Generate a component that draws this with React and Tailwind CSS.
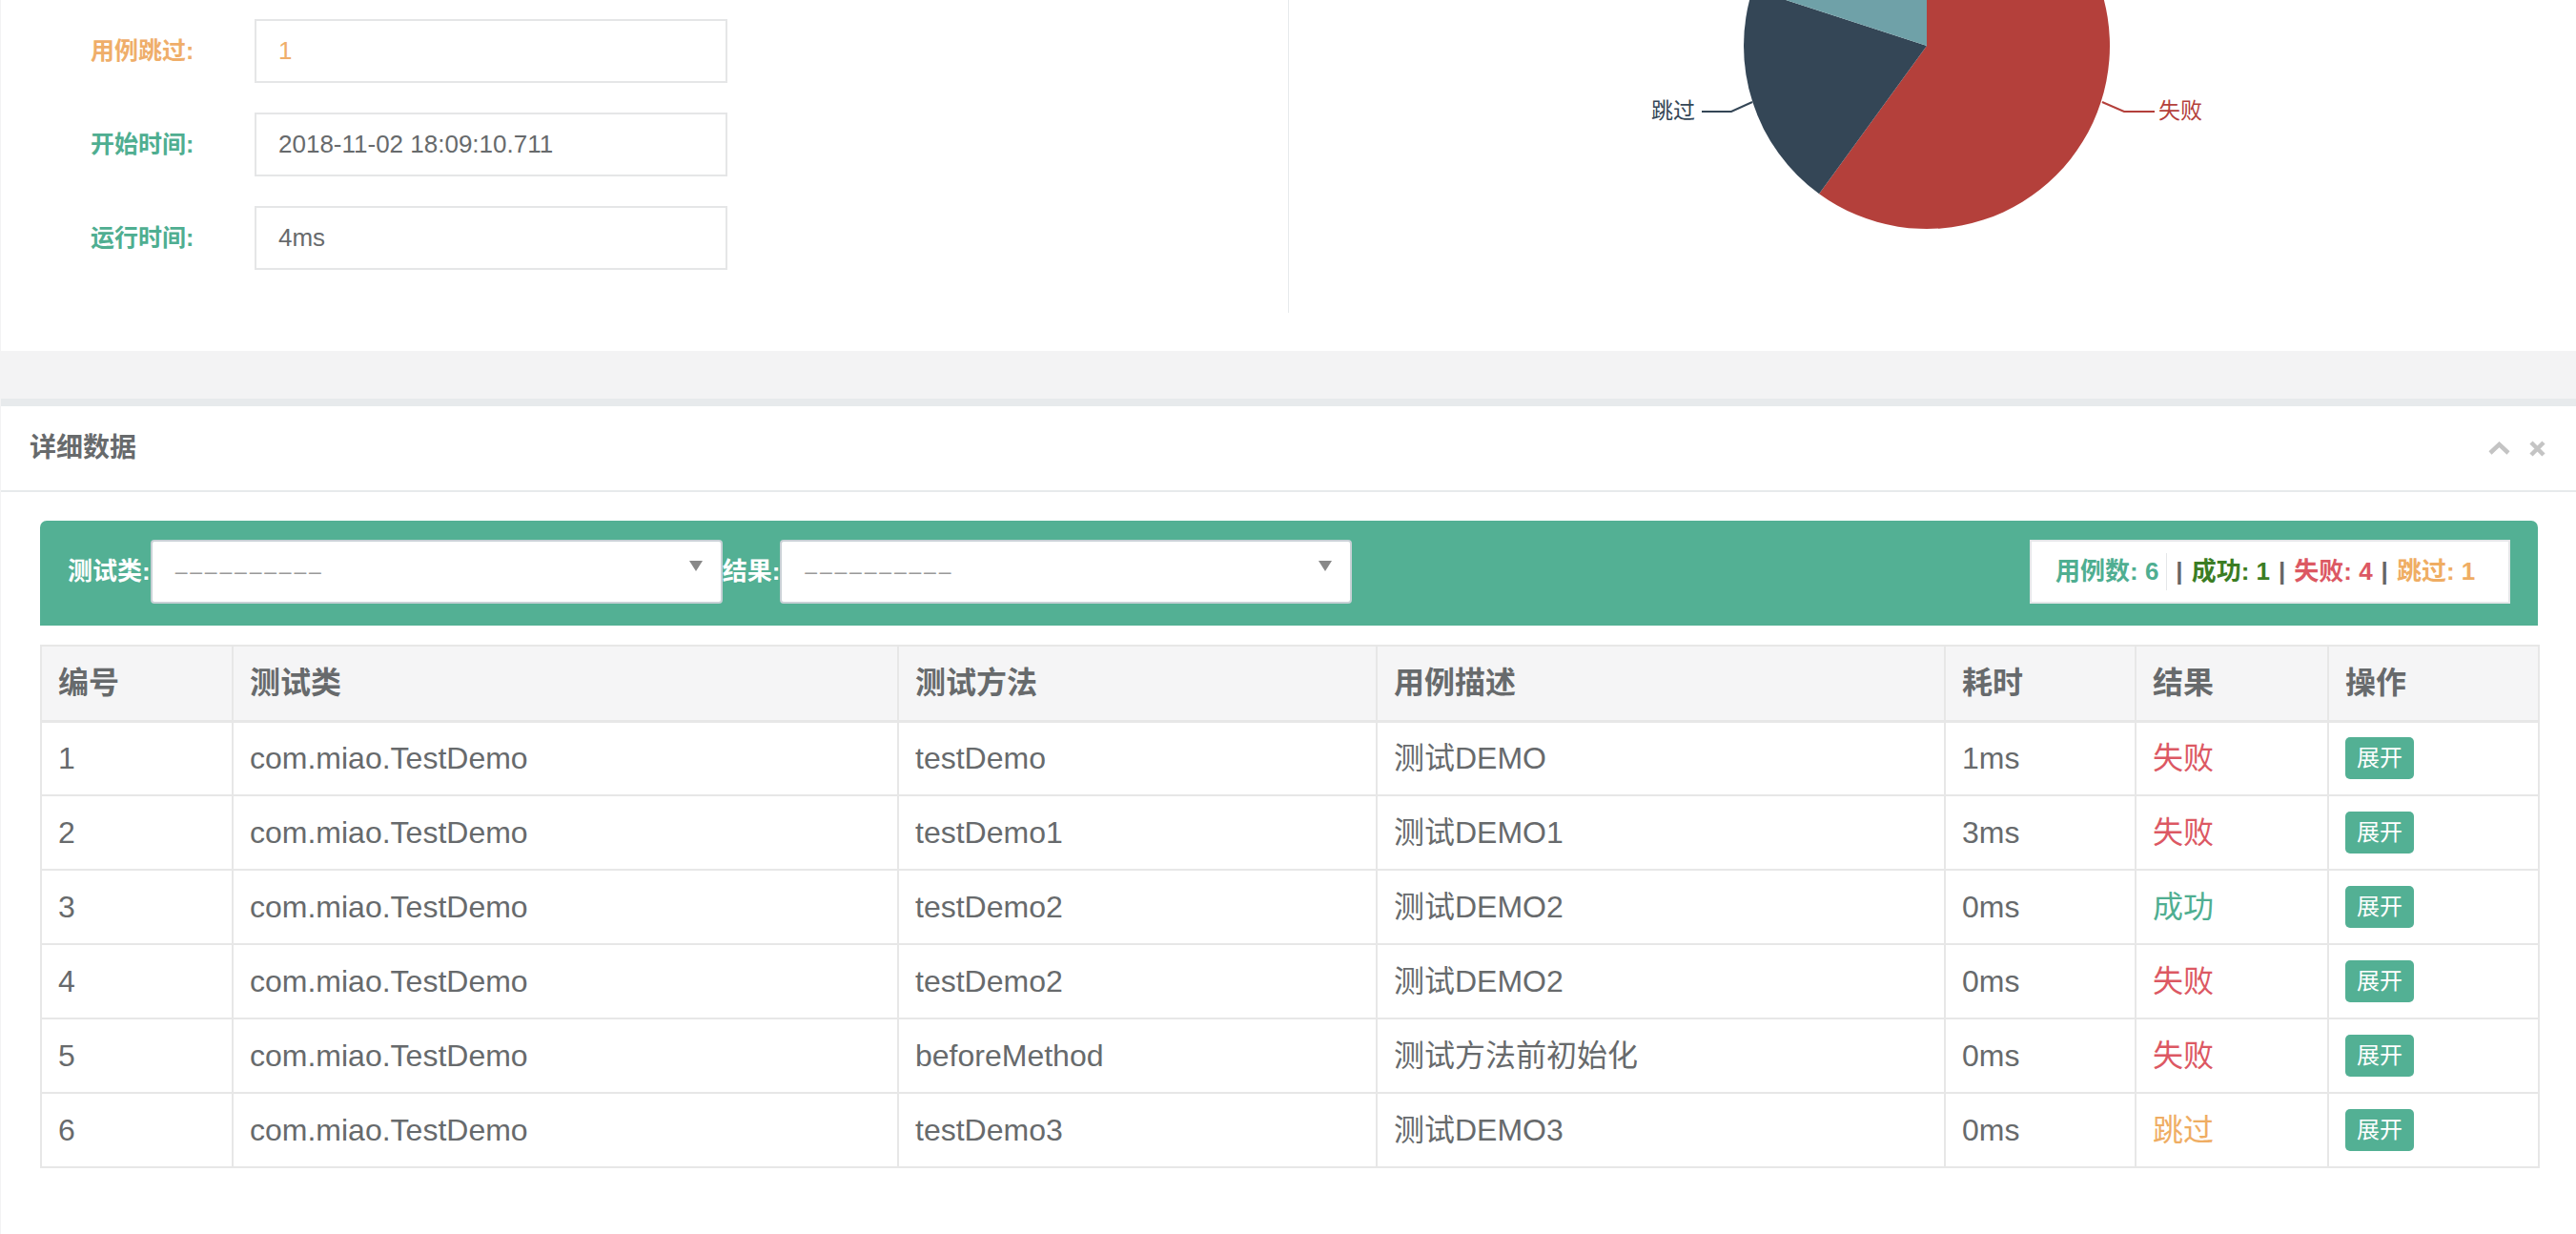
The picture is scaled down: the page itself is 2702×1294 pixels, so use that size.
import React from 'react';

const rows = [
  { id: 1, cls: 'com.miao.TestDemo', method: 'testDemo', desc: '测试DEMO', time: '1ms', result: '失败' },
  { id: 2, cls: 'com.miao.TestDemo', method: 'testDemo1', desc: '测试DEMO1', time: '3ms', result: '失败' },
  { id: 3, cls: 'com.miao.TestDemo', method: 'testDemo2', desc: '测试DEMO2', time: '0ms', result: '成功' },
  { id: 4, cls: 'com.miao.TestDemo', method: 'testDemo2', desc: '测试DEMO2', time: '0ms', result: '失败' },
  { id: 5, cls: 'com.miao.TestDemo', method: 'beforeMethod', desc: '测试方法前初始化', time: '0ms', result: '失败' },
  { id: 6, cls: 'com.miao.TestDemo', method: 'testDemo3', desc: '测试DEMO3', time: '0ms', result: '跳过' },
];

const resultColor = {
  失败: 'text-[#dc5863]',
  成功: 'text-[#4fae91]',
  跳过: 'text-[#efad63]',
};

const InfoRow = ({ label, value, labelClass, valueClass }) => (
  <div className="flex items-center h-[67px]">
    <div className={`w-[172px] text-[25px] font-bold ${labelClass}`}>{label}</div>
    <div className={`w-[496px] h-[67px] border-2 border-[#e5e6e7] flex items-center pl-[23px] text-[26px] ${valueClass}`}>
      {value}
    </div>
  </div>
);

const Select = () => (
  <div className="relative w-[600px] h-[67px] bg-white border-2 border-[#c9d1d6] rounded-[4px] flex items-center pl-[24px]">
    <span className="text-[23px] tracking-[2.8px] text-[#999] leading-none">––––––––––</span>
    <svg className="absolute right-[19px] top-[20px]" width="14" height="11" viewBox="0 0 14 11">
      <path d="M0 0 L14 0 L7 11 Z" fill="#888" />
    </svg>
  </div>
);

const PieChart = () => (
  <svg width="1350" height="328" viewBox="0 0 1350 328">
    <path d="M669 48 L669 -144 A192 192 0 1 1 556.1 203.3 Z" fill="#b4403b" />
    <path d="M669 48 L556.1 203.3 A192 192 0 0 1 486.4 -11.3 Z" fill="#344656" />
    <path d="M669 48 L486.4 -11.3 A192 192 0 0 1 669 -144 Z" fill="#6fa1a8" />
    <polyline points="486,107 464,117 433,117" fill="none" stroke="#344656" strokeWidth="2" />
    <text x="426" y="124" textAnchor="end" fontSize="23" fill="#344656">跳过</text>
    <polyline points="853,107 876,117 908,117" fill="none" stroke="#b4403b" strokeWidth="2" />
    <text x="912" y="124" fontSize="23" fill="#b4403b">失败</text>
  </svg>
);

const App = () => {
  return (
    <div className="w-[2702px] h-[1294px] overflow-hidden bg-[#f3f3f4] font-['Liberation_Sans','Noto_Sans_CJK_SC',sans-serif] text-[#676a6c]">
      {/* summary panel */}
      <div className="ml-px h-[368px] bg-white flex">
        <div className="w-[1350px] pl-[94px] pt-[20px] flex flex-col gap-[31px]">
          <InfoRow label="用例跳过:" value="1" labelClass="text-[#efae6a]" valueClass="text-[#efae6a]" />
          <InfoRow label="开始时间:" value="2018-11-02 18:09:10.711" labelClass="text-[#4fae91]" valueClass="text-[#676a6c]" />
          <InfoRow label="运行时间:" value="4ms" labelClass="text-[#4fae91]" valueClass="text-[#676a6c]" />
        </div>
        <div className="h-[328px] border-l border-[#e7eaec] overflow-hidden">
          <PieChart />
        </div>
      </div>

      {/* detail panel */}
      <div className="mt-[50px] ml-px bg-white border-t-8 border-[#e7eaec] h-[900px]">
        <div className="h-[90px] border-b-2 border-[#e7eaec] flex items-center justify-between pl-[30px] pr-[32px]">
          <h5 className="text-[28px] font-bold text-[#676a6c]">详细数据</h5>
          <div className="flex items-center gap-[20px]">
            <svg width="23" height="14" viewBox="0 0 23 14">
              <polyline points="2,12 11.5,3 21,12" fill="none" stroke="#c4c4c4" strokeWidth="4.5" />
            </svg>
            <svg width="17" height="17" viewBox="0 0 17 17">
              <path d="M2 2 L15 15 M15 2 L2 15" stroke="#c4c4c4" strokeWidth="4.5" />
            </svg>
          </div>
        </div>

        <div className="pl-[41px] pr-[40px] pt-[30px]">
          <div className="h-[110px] bg-[#53b094] rounded-t-[7px] flex items-start pt-[20px] pl-[29px] pr-[29px]">
            <span className="h-[67px] flex items-center text-[26px] font-bold text-white">测试类:</span>
            <Select />
            <span className="h-[67px] flex items-center text-[26px] font-bold text-white">结果:</span>
            <Select />
            <div className="ml-auto w-[504px] h-[67px] bg-white border-2 border-[#e5e7e9] flex items-center pl-[25px] text-[26px] font-bold">
              <span className="text-[#4fae91] pr-[8px] border-r border-[#e5e7e9]">用例数: 6</span>
              <span className="text-[#666] px-[9px]">|</span>
              <span className="text-[#3b7d23]">成功: 1</span>
              <span className="text-[#666] px-[9px]">|</span>
              <span className="text-[#dc5863]">失败: 4</span>
              <span className="text-[#666] px-[9px]">|</span>
              <span className="text-[#efad63]">跳过: 1</span>
            </div>
          </div>

          <table className="mt-[20px] w-[2620px] table-fixed border-collapse text-[32px] text-[#676a6c]">
            <colgroup>
              <col className="w-[201px]" />
              <col className="w-[698px]" />
              <col className="w-[502px]" />
              <col className="w-[596px]" />
              <col className="w-[200px]" />
              <col className="w-[202px]" />
              <col className="w-[221px]" />
            </colgroup>
            <thead>
              <tr className="h-[79px] bg-[#f5f5f6]">
                {['编号', '测试类', '测试方法', '用例描述', '耗时', '结果', '操作'].map((h) => (
                  <th key={h} className="border-2 border-b-[3px] border-[#e7e7e7] text-left font-bold pl-[17px]">
                    {h}
                  </th>
                ))}
              </tr>
            </thead>
            <tbody>
              {rows.map((r) => (
                <tr key={r.id} className="h-[78px]">
                  <td className="border-2 border-[#e7e7e7] pl-[17px]">{r.id}</td>
                  <td className="border-2 border-[#e7e7e7] pl-[17px]">{r.cls}</td>
                  <td className="border-2 border-[#e7e7e7] pl-[17px]">{r.method}</td>
                  <td className="border-2 border-[#e7e7e7] pl-[17px]">{r.desc}</td>
                  <td className="border-2 border-[#e7e7e7] pl-[17px]">{r.time}</td>
                  <td className={`border-2 border-[#e7e7e7] pl-[17px] ${resultColor[r.result]}`}>{r.result}</td>
                  <td className="border-2 border-[#e7e7e7] pl-[17px]">
                    <button className="w-[72px] h-[44px] rounded-[5px] bg-[#53b094] text-white text-[24px] leading-none flex items-center justify-center">
                      展开
                    </button>
                  </td>
                </tr>
              ))}
            </tbody>
          </table>
        </div>
      </div>
    </div>
  );
};

export default App;
